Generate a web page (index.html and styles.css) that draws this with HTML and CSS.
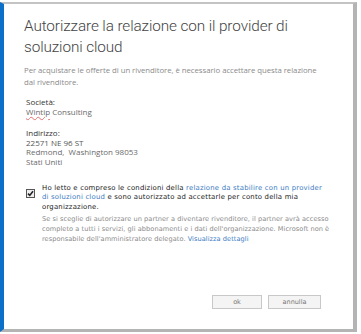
FILE: index.html
```html
<!DOCTYPE html>
<html lang="it">
<head>
<meta charset="utf-8">
<link rel="stylesheet" href="styles.css">
</head>
<body>
<div class="dialog">
  <div class="content">
    <h1 class="title">Autorizzare la relazione con il provider di soluzioni cloud</h1>
    <p class="intro">Per acquistare le offerte di un rivenditore, è necessario accettare questa relazione dal rivenditore.</p>
    <div class="info company">
      <div class="label">Società:</div>
      <div class="value"><span class="spell">Wintip</span> Consulting</div>
    </div>
    <div class="info address">
      <div class="label">Indirizzo:</div>
      <div class="value dark">22571 NE 96 ST</div>
      <div class="value">Redmond, &nbsp;Washington 98053</div>
      <div class="value">Stati Uniti</div>
    </div>
    <div class="consent">
      <span class="check"><svg width="7" height="7" viewBox="0 0 7 7"><path d="M1 3.6 L2.8 5.4 L6 1.2" fill="none" stroke="#222" stroke-width="1.6"/></svg></span>
      <div class="consent-text">
        <p class="agree">Ho letto e compreso le condizioni della <a class="link">relazione da stabilire con un provider di soluzioni cloud</a> e sono autorizzato ad accettarle per conto della mia organizzazione.</p>
        <p class="note">Se si sceglie di autorizzare un partner a diventare rivenditore, il partner avrà accesso completo a tutti i servizi, gli abbonamenti e i dati dell'organizzazione. Microsoft non è responsabile dell'amministratore delegato. <a class="link">Visualizza dettagli</a></p>
      </div>
    </div>
  </div>
  <div class="footer">
    <button class="btn ok">ok</button>
    <button class="btn">annulla</button>
  </div>
</div>
</body>
</html>
```
FILE: styles.css
```css
html, body {
  margin: 0;
  padding: 0;
  background: #ffffff;
}
body {
  padding-top: 2px;
  font-family: "Open Sans", "DejaVu Sans", sans-serif;
}
.dialog {
  box-sizing: border-box;
  width: 357px;
  height: 330px;
  border-top: 2px solid #c4c4c4;
  border-left: 4px solid #0c70c8;
  border-right: 4px solid #b4b4b4;
  border-bottom: 3px solid #b4b4b4;
  display: flex;
  flex-direction: column;
  background: #fff;
}
.content {
  flex: 1;
  padding: 0 0 0 20px;
}
.title {
  margin: 12px 0 0 0;
  font-family: Roboto, "Open Sans", sans-serif;
  font-weight: 300;
  font-size: 15.3px;
  line-height: 21px;
  letter-spacing: -0.1px;
  color: #444;
  width: 300px;
}
.intro {
  margin: 6px 0 0 0;
  font-size: 7.8px;
  line-height: 12px;
  letter-spacing: -0.05px;
  color: #8a8a8a;
  width: 302px;
}
.info {
  margin: 9px 0 0 2px;
  font-size: 8px;
  line-height: 9.6px;
}
.info.address { margin-top: 12px; }
.label { color: #333; }
.value { color: #6a6a6a; }
.value.dark { color: #555; }
.spell {
  text-decoration: underline wavy #e07070;
  text-decoration-thickness: 0.5px;
}
.consent {
  margin: 17px 0 0 2px;
  display: flex;
  gap: 7px;
}
.check {
  margin-top: 5px;
  flex: none;
  width: 7px;
  height: 7px;
  border: 1px solid #555;
  background: #eee;
  display: flex;
  align-items: center;
  justify-content: center;
}
.consent-text {
  width: 300px;
  font-family: "DejaVu Sans", sans-serif;
  line-height: 9.8px;
}
.agree {
  margin: 0;
  width: 286px;
  font-size: 6.9px;
  color: #222;
  letter-spacing: 0.2px;
}
.note {
  margin: 2px 0 0 0;
  font-size: 6.6px;
  color: #8a8a8a;
  letter-spacing: 0.05px;
}
.link {
  color: #3b7cc4;
}
.footer {
  display: flex;
  justify-content: flex-end;
  gap: 6px;
  padding: 0 32px 20px 0;
}
.btn {
  box-sizing: border-box;
  height: 14px;
  padding: 0;
  border: 1px solid #c8c8c8;
  background: #f4f4f4;
  font-family: "DejaVu Sans", sans-serif;
  font-size: 6.5px;
  color: #777;
}
.btn.ok { width: 50px; }
.btn:not(.ok) { width: 53px; }
```
